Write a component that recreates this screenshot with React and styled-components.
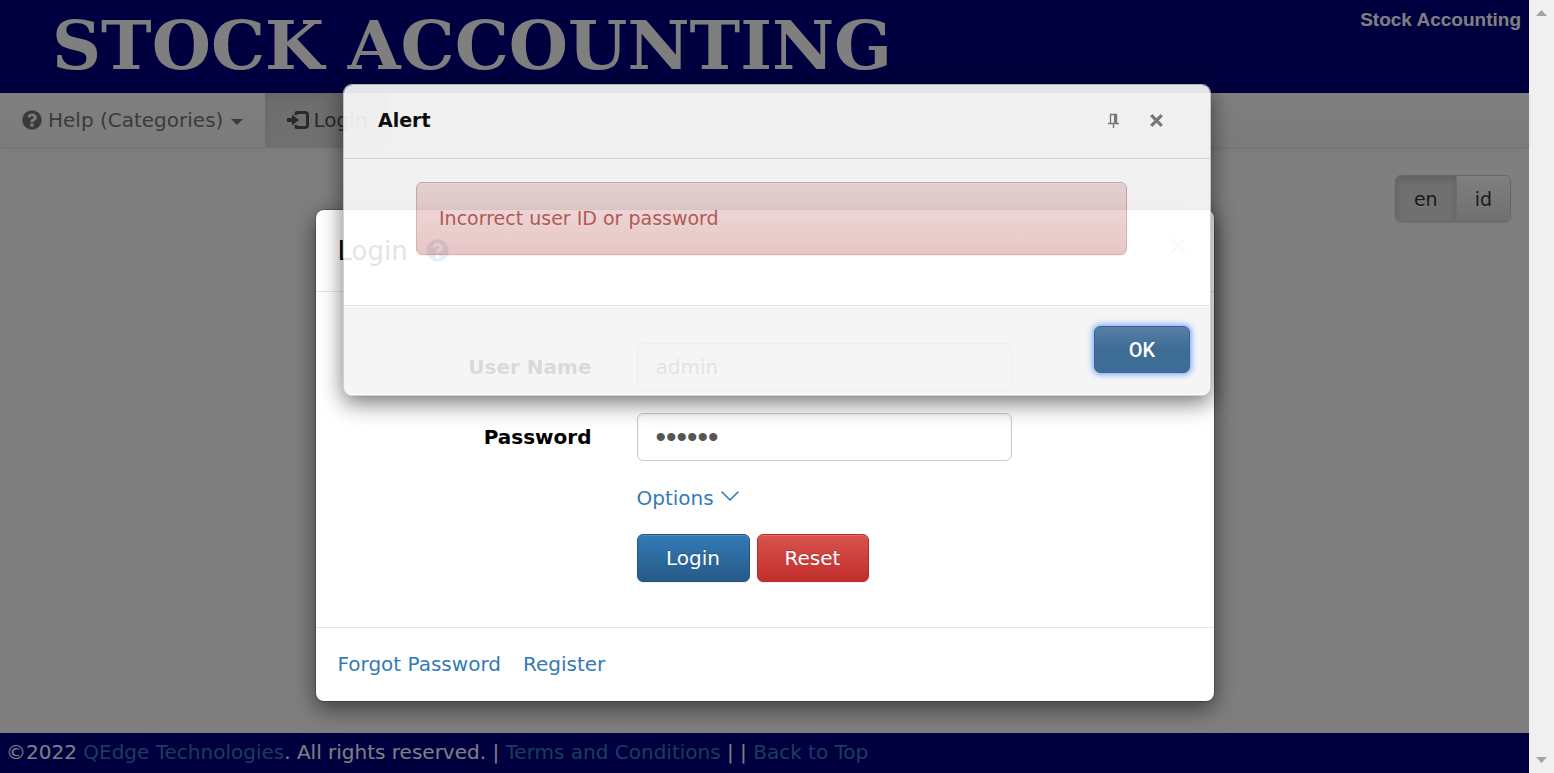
import React from 'react';
import styled, { createGlobalStyle, css } from 'styled-components';
import { FaQuestionCircle } from 'react-icons/fa';

const GlobalStyle = createGlobalStyle`
  *, *::before, *::after { box-sizing: border-box; }
  body {
    margin: 0;
    overflow: hidden;
    font-family: 'DejaVu Sans', Verdana, sans-serif;
    font-size: 20px;
    line-height: 28px;
    color: #000;
  }
  button, input { font: inherit; }
  a { color: #337ab7; text-decoration: none; }
`;

const Screen = styled.div`
  position: relative;
  display: flex;
  height: 100vh;
`;

const Page = styled.div`
  position: relative;
  flex: 1;
  min-width: 0;
  display: flex;
  flex-direction: column;
  background: #fff;
`;

const Header = styled.header`
  display: flex;
  justify-content: space-between;
  height: 93px;
  padding: 0 8px 0 52px;
  background: #000080;
  color: #fff;
`;

const Logo = styled.h1`
  margin: 0;
  font: bold 68px/90px 'DejaVu Serif', serif;
  white-space: nowrap;
`;

const CompanyName = styled.p`
  margin: 0;
  padding-top: 6px;
  font-family: 'Liberation Sans', Arial, sans-serif;
  font-size: 19px;
  font-weight: bold;
  white-space: nowrap;
`;

const Navbar = styled.nav`
  display: flex;
  height: 55px;
  border-bottom: 1px solid #e7e7e7;
  background: linear-gradient(#fff, #f8f8f8);
  box-shadow: 0 1px 5px rgba(0, 0, 0, 0.075);
`;

const NavItem = styled.a`
  display: flex;
  align-items: center;
  gap: ${(p) => (p.$active ? 4 : 6)}px;
  padding: 0 22px;
  color: ${(p) => (p.$active ? '#555' : '#777')};
  ${(p) =>
    p.$active &&
    css`
      background: linear-gradient(#dbdbdb, #e2e2e2);
      box-shadow: inset 0 3px 9px rgba(0, 0, 0, 0.075);
    `}
  svg { flex: none; }
`;

const Caret = styled.span`
  margin: 4px 0 0 2px;
  border: 6px solid transparent;
  border-top-color: currentColor;
  border-bottom: 0;
`;

const Main = styled.main`
  flex: 1;
  display: flex;
  justify-content: flex-end;
  align-items: flex-start;
  padding: 27px 18px;
`;

const Languages = styled.div`
  display: flex;
  height: 47px;
  border: 1px solid #ccc;
  border-radius: 6px;
  overflow: hidden;
  font-size: 19px;
  box-shadow: 0 1px 2px rgba(0, 0, 0, 0.1);
`;

const LanguageButton = styled.button`
  padding: 0 18px;
  border: 0;
  color: #333;
  text-shadow: 0 1px 0 #fff;
  background: linear-gradient(#fff, #e0e0e0);
  ${(p) =>
    p.$active &&
    css`
      background: #e0e0e0;
      border-right: 1px solid #dbdbdb;
      box-shadow: inset 0 4px 7px rgba(0, 0, 0, 0.125);
    `}
`;

const Footer = styled.footer`
  height: 40px;
  padding: 5px 6px;
  background: #000080;
  color: #fff;
  white-space: nowrap;
`;

const Backdrop = styled.div`
  position: absolute;
  inset: 0;
  display: flex;
  justify-content: center;
  align-items: flex-start;
  padding-top: 209px;
  background: rgba(0, 0, 0, 0.5);
`;

const LoginDialog = styled.section`
  width: 900px;
  max-width: 100%;
  border: 1px solid rgba(0, 0, 0, 0.2);
  border-radius: 9px;
  background: #fff;
  background-clip: padding-box;
  box-shadow: 0 7px 22px rgba(0, 0, 0, 0.5);
`;

const DialogHeader = styled.header`
  display: flex;
  align-items: center;
  height: 82px;
  padding: 0 22px;
  border-bottom: 1px solid #e5e5e5;
`;

const DialogTitle = styled.h2`
  margin: 0 18px 0 0;
  font-size: 26px;
  font-weight: normal;
`;

const HelpLink = styled.a`
  display: flex;
`;

const IconButton = styled.button`
  display: flex;
  padding: 0;
  border: 0;
  background: none;
  color: inherit;
`;

const DialogClose = styled(IconButton)`
  margin: 0 5px 10px auto;
  color: #ccc;
`;

const LoginForm = styled.form`
  display: grid;
  grid-template-columns: 254px 375px;
  gap: 22px 45px;
  padding: 51px 22px 45px;
`;

const Label = styled.label`
  align-self: center;
  text-align: right;
  font-weight: bold;
`;

const Field = styled.input`
  width: 100%;
  height: 48px;
  padding: 0 18px;
  border: 1px solid #ccc;
  border-radius: 6px;
  background: #fff;
  color: #555;
  box-shadow: inset 0 1px 2px rgba(0, 0, 0, 0.075);
  &[type='password'] {
    font-family: 'Liberation Sans', Arial, sans-serif;
    font-size: 30px;
  }
`;

const OptionsLink = styled.a`
  grid-column: 2;
  display: flex;
  align-items: center;
  gap: 7px;
  height: 29px;
  svg { margin-bottom: 4px; }
`;

const Actions = styled.div`
  grid-column: 2;
  display: flex;
  gap: 7px;
`;

const ActionButton = styled.button`
  width: ${(p) => p.$width || 113}px;
  height: 48px;
  padding: 0;
  border: 1px solid ${(p) => (p.$danger ? '#b92c28' : '#245580')};
  border-radius: 6px;
  color: #fff;
  text-shadow: 0 -1px 0 rgba(0, 0, 0, 0.2);
  background: ${(p) =>
    p.$danger ? 'linear-gradient(#d9534f, #c12e2a)' : 'linear-gradient(#337ab7, #265a88)'};
  box-shadow: inset 0 1px 0 rgba(255, 255, 255, 0.15), 0 1px 1px rgba(0, 0, 0, 0.075);
`;

const DialogFooter = styled.footer`
  display: flex;
  align-items: center;
  gap: 22px;
  height: 74px;
  padding: 0 22px 2px;
  border-top: 1px solid #e5e5e5;
`;

const AlertLayer = styled.div`
  position: absolute;
  inset: 0;
  display: flex;
  justify-content: center;
  align-items: flex-start;
  padding-top: 84px;
`;

const AlertDialog = styled.section`
  width: 868px;
  max-width: 100%;
  border: 1px solid #ccc;
  border-radius: 9px;
  overflow: hidden;
  background: #fff;
  background-clip: padding-box;
  box-shadow: 0 7px 22px rgba(0, 0, 0, 0.6);
  opacity: 0.89;
`;

const AlertHeader = styled.header`
  display: flex;
  align-items: center;
  gap: 31px;
  height: 74px;
  padding: 0 47px 3px 34px;
  border-bottom: 1px solid #ddd;
  color: #777;
`;

const AlertTitle = styled.h2`
  margin: 0 auto 0 0;
  font-size: 19px;
  color: #000;
`;

const AlertBody = styled.div`
  padding: 23px 83px 50px 72px;
`;

const Message = styled.p`
  margin: 0;
  padding: 21px 22px 22px;
  border: 1px solid #dca7a7;
  border-radius: 6px;
  color: #a94442;
  font-size: 19px;
  text-shadow: 0 1px 0 rgba(255, 255, 255, 0.2);
  background: linear-gradient(#efdada, #e5c0c0);
  box-shadow: inset 0 1px 0 rgba(255, 255, 255, 0.25), 0 1px 2px rgba(0, 0, 0, 0.05);
`;

const AlertFooter = styled.footer`
  display: flex;
  justify-content: flex-end;
  height: 90px;
  padding: 20px;
  border-top: 1px solid #ddd;
  background: #f4f4f4;
  box-shadow: inset 0 1px 0 #fff, inset 0 -1px 0 #fff;
`;

const OkButton = styled.button`
  width: 96px;
  height: 47px;
  border: 1px solid #245580;
  border-radius: 6px;
  color: #fff;
  font-family: Roboto, sans-serif;
  font-weight: 500;
  background: linear-gradient(#44709d, #265a88 50%);
  box-shadow: 0 0 6px 1px #4d90fe;
`;

const ScrollTrack = styled.div`
  display: flex;
  flex-direction: column;
  justify-content: space-between;
  align-items: center;
  width: 25px;
  padding: 10px 0;
  background: #f0f0f0;
`;

const LoginIcon = () => (
  <svg width="22" height="18" viewBox="0 0 22 18" fill="none" aria-hidden="true">
    <path d="M9 4V2.500Q9 1.500 10 1.500H18Q20.500 1.500 20.500 4V14Q20.500 16.500 18 16.500H10Q9 16.500 9 15.500V14" stroke="currentColor" strokeWidth="3" />
    <path d="M0 7H5V3.500L12 9L5 14.500V11H0Z" fill="currentColor" />
  </svg>
);

const PinIcon = () => (
  <svg width="11" height="15" viewBox="0 0 11 15" fill="none" stroke="currentColor" aria-hidden="true">
    <path d="M2.500 10V1.500H8.500V10M0 10.500H11M5.500 11V15" strokeWidth="1.400" />
    <path d="M7.200 1V10" strokeWidth="2.400" />
  </svg>
);

const CrossIcon = ({ size, weight }) => (
  <svg width={size} height={size} viewBox="0 0 16 16" fill="none" stroke="currentColor" strokeWidth={weight} aria-hidden="true">
    <path d="M1.500 1.500L14.500 14.500M14.500 1.500L1.500 14.500" />
  </svg>
);

const ChevronIcon = () => (
  <svg width="18" height="10" viewBox="0 0 18 10" fill="none" stroke="currentColor" strokeWidth="1.600" strokeLinecap="round" strokeLinejoin="round" aria-hidden="true">
    <path d="M1 1L9 9L17 1" />
  </svg>
);

const ScrollArrow = ({ down }) => (
  <svg width="11" height="6" viewBox="0 0 11 6" fill="#a3a3a3" aria-hidden="true">
    <path d={down ? 'M0 0H11L5.500 6Z' : 'M0 6H11L5.500 0Z'} />
  </svg>
);

export default function App() {
  return (
    <Screen>
      <GlobalStyle />
      <Page>
        <Header>
          <Logo>STOCK ACCOUNTING</Logo>
          <CompanyName>Stock Accounting</CompanyName>
        </Header>
        <Navbar>
          <NavItem href="#help">
            <FaQuestionCircle size={20} />
            Help (Categories)
            <Caret />
          </NavItem>
          <NavItem href="#login" $active>
            <LoginIcon />
            Login
          </NavItem>
        </Navbar>
        <Main>
          <Languages>
            <LanguageButton type="button" $active>en</LanguageButton>
            <LanguageButton type="button">id</LanguageButton>
          </Languages>
        </Main>
        <Footer>
          ©2022 <a href="#company">QEdge Technologies</a>. All rights reserved. |{' '}
          <a href="#terms">Terms and Conditions</a> | | <a href="#top">Back to Top</a>
        </Footer>
        <Backdrop>
          <LoginDialog role="dialog" aria-label="Login">
            <DialogHeader>
              <DialogTitle>Login</DialogTitle>
              <HelpLink href="#login-help" aria-label="Login help">
                <FaQuestionCircle size={23} />
              </HelpLink>
              <DialogClose type="button" aria-label="Close">
                <CrossIcon size={17} weight={2} />
              </DialogClose>
            </DialogHeader>
            <LoginForm onSubmit={(e) => e.preventDefault()}>
              <Label htmlFor="username">User Name</Label>
              <Field id="username" type="text" defaultValue="admin" />
              <Label htmlFor="password">Password</Label>
              <Field id="password" type="password" defaultValue="master" />
              <OptionsLink href="#options">
                Options
                <ChevronIcon />
              </OptionsLink>
              <Actions>
                <ActionButton type="submit">Login</ActionButton>
                <ActionButton type="reset" $danger $width={112}>Reset</ActionButton>
              </Actions>
            </LoginForm>
            <DialogFooter>
              <a href="#forgot">Forgot Password</a>
              <a href="#register">Register</a>
            </DialogFooter>
          </LoginDialog>
        </Backdrop>
      </Page>
      <ScrollTrack>
        <ScrollArrow />
        <ScrollArrow down />
      </ScrollTrack>
      <AlertLayer>
        <AlertDialog role="alertdialog" aria-label="Alert">
          <AlertHeader>
            <AlertTitle>Alert</AlertTitle>
            <IconButton type="button" aria-label="Pin">
              <PinIcon />
            </IconButton>
            <IconButton type="button" aria-label="Close">
              <CrossIcon size={13} weight={4} />
            </IconButton>
          </AlertHeader>
          <AlertBody>
            <Message>Incorrect user ID or password</Message>
          </AlertBody>
          <AlertFooter>
            <OkButton type="button">OK</OkButton>
          </AlertFooter>
        </AlertDialog>
      </AlertLayer>
    </Screen>
  );
}
